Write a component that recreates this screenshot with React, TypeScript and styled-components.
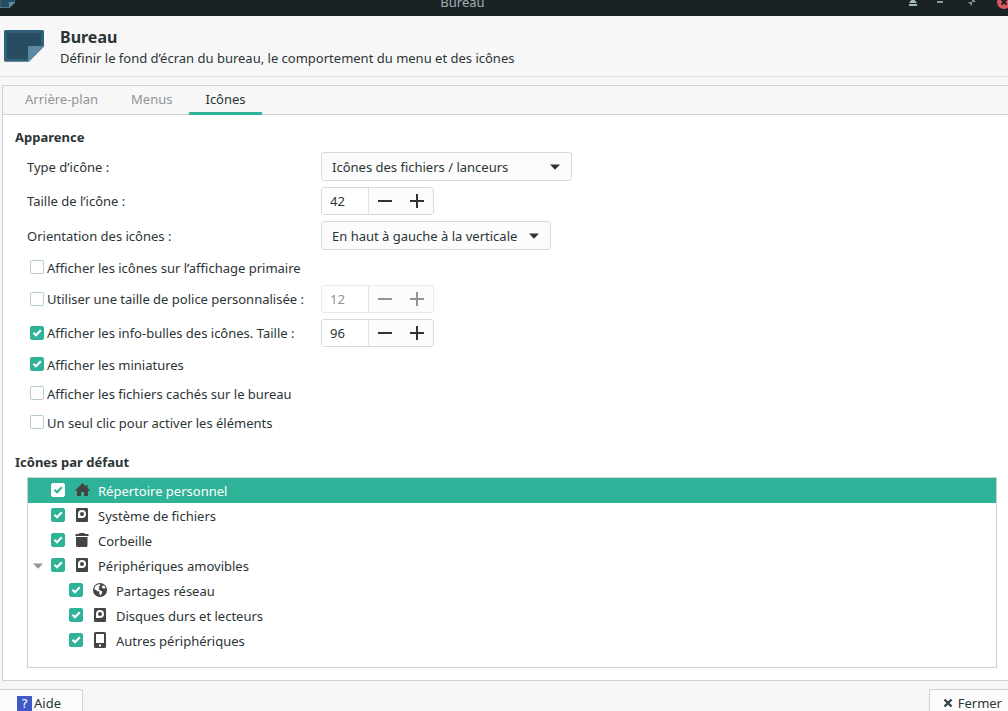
import React, { useId, useState } from "react";
import styled, { createGlobalStyle } from "styled-components";

const accent = "#2eb398";
const ink = "#2b3436";
const line = "#cfd1d1";
const soft = "#d8dada";

const GlobalStyle = createGlobalStyle`
  * { box-sizing: border-box; }
  body {
    margin: 0;
    overflow: hidden;
    background: #f7f7f7;
    color: ${ink};
    font: 13px/20px "Noto Sans", sans-serif;
  }
  button, input, select { font: inherit; color: inherit; margin: 0; }
  svg { display: block; flex: none; }
`;

const Window = styled.div`
  display: flex;
  flex-direction: column;
  height: 100vh;
  overflow: hidden;
`;

const TitleBar = styled.header`
  display: flex;
  align-items: flex-end;
  flex: none;
  height: 16px;
  overflow: hidden;
  background: #1b2224;
`;

const TitleRow = styled.div`
  display: grid;
  grid-template-columns: 1fr auto 1fr;
  align-items: center;
  flex: 1;
  height: 28px;
`;

const WindowTitle = styled.span`
  color: #a4aeb8;
  padding-right: 83px;
`;

const WindowButtons = styled.div`
  display: flex;
  justify-content: flex-end;
  gap: 16px;
  margin-right: -3px;
`;

const WindowButton = styled.button`
  padding: 0;
  border: 0;
  background: none;
`;

const Header = styled.div`
  display: flex;
  align-items: center;
  flex: none;
  gap: 16px;
  height: 61px;
  padding: 0 4px;
  border-bottom: 1px solid #dcdede;
`;

const Title = styled.h1`
  margin: 0;
  padding-top: 2px;
  font-size: 16px;
  line-height: 22px;
`;

const Subtitle = styled.p`
  margin: 0;
`;

const Notebook = styled.main`
  display: flex;
  flex-direction: column;
  flex: none;
  margin: 8px 0 0 2px;
  border: 1px solid ${line};
  border-right: 0;
  background: #fff;
`;

const TabBar = styled.div`
  display: flex;
  gap: 1px;
  height: 29px;
  padding-left: 6px;
  background: #f7f7f7;
  box-shadow: inset 0 -1px ${line};
`;

const Tab = styled.button<{ $active: boolean }>`
  padding: 0 16px;
  border: 0;
  border-bottom: 3px solid ${(p) => (p.$active ? accent : "transparent")};
  background: none;
  && { color: ${(p) => (p.$active ? ink : "#8f9495")}; }
`;

const TabPage = styled.div`
  display: flex;
  flex-direction: column;
  gap: 18px;
  padding: 12px 11px 12px 12px;
`;

const Section = styled.section`
  display: flex;
  flex-direction: column;
  gap: 5px;
`;

const SectionTitle = styled.h2`
  margin: 0;
  font-size: 13px;
  line-height: 20px;
`;

const Form = styled.div`
  display: flex;
  flex-direction: column;
  gap: 6px;
  padding-left: 12px;
`;

const Row = styled.div`
  display: flex;
  align-items: center;
  min-height: 23px;
`;

const LabelCell = styled.div`
  display: flex;
  align-items: center;
  width: 294px;
  gap: 3px;
  white-space: nowrap;
`;

const CheckCell = styled(LabelCell)`
  padding-left: 3px;
`;

const CheckWrap = styled.span`
  display: grid;
  flex: none;
  width: 14px;
  height: 14px;
  margin-bottom: 1px;
  & > * { grid-area: 1 / 1; }
  & > svg { pointer-events: none; }
`;

const CheckInput = styled.input<{ $onAccent?: boolean }>`
  appearance: none;
  width: 14px;
  height: 14px;
  border: 1px solid #b4cfcc;
  border-radius: 2px;
  background: #fff;
  &:checked {
    border-color: ${(p) => (p.$onAccent ? "#fff" : accent)};
    background: ${(p) => (p.$onAccent ? "#fff" : accent)};
  }
`;

const SelectWrap = styled.span<{ $width: number }>`
  display: grid;
  align-items: center;
  width: ${(p) => p.$width}px;
  height: 29px;
  & > * { grid-area: 1 / 1; }
  & > svg { justify-self: end; margin-right: 12px; pointer-events: none; }
`;

const Select = styled.select`
  appearance: none;
  width: 100%;
  height: 29px;
  padding: 0 30px 0 10px;
  border: 1px solid ${soft};
  border-radius: 3px;
  background: #fcfcfc;
`;

const Spin = styled.span<{ $disabled?: boolean }>`
  display: flex;
  height: 28px;
  border: 1px solid ${(p) => (p.$disabled ? "#e9eaea" : soft)};
  border-radius: 3px;
  background: #fcfcfc;
  color: ${(p) => (p.$disabled ? "#8f9495" : ink)};
  overflow: hidden;
`;

const SpinInput = styled.input`
  width: 47px;
  padding: 0 8px;
  border: 0;
  border-right: 1px solid #e0e2e2;
  background: #fff;
`;

const SpinButton = styled.button`
  display: grid;
  place-items: center;
  width: 32px;
  padding: 0;
  border: 0;
  background: none;
`;

const Tree = styled.ul`
  margin: 0 0 0 12px;
  padding: 0 0 14px;
  border: 1px solid ${line};
  list-style: none;
`;

const TreeRow = styled.li<{ $selected?: boolean; $level: number }>`
  display: flex;
  align-items: center;
  height: 25px;
  padding-left: ${(p) => 5 + p.$level * 18}px;
  background: ${(p) => (p.$selected ? accent : "transparent")};
  color: ${(p) => (p.$selected ? "#fff" : ink)};
`;

const Expander = styled.span`
  width: 18px;
`;

const TreeIcon = styled.span`
  margin: 0 8px 1px 9px;
`;

const Footer = styled.footer`
  display: flex;
  justify-content: space-between;
  flex: none;
  padding-top: 8px;
`;

const FooterButton = styled.button<{ $side: "left" | "right" }>`
  display: flex;
  align-items: center;
  gap: ${(p) => (p.$side === "left" ? 2 : 5)}px;
  height: 28px;
  padding: ${(p) => (p.$side === "left" ? "0 21px 0 17px" : "0 6px 0 13px")};
  border: 1px solid ${line};
  border-width: ${(p) => (p.$side === "left" ? "1px 1px 1px 0" : "1px 0 1px 1px")};
  border-radius: ${(p) => (p.$side === "left" ? "0 3px 3px 0" : "3px 0 0 3px")};
  background: #fcfcfc;
`;

const HelpBadge = styled.span`
  width: 15px;
  height: 15px;
  background: #4059c8;
  color: #fff;
  font: 13px/15px "DejaVu Sans Mono", monospace;
  text-align: center;
`;

function DesktopIcon({ width, height }: { width: number; height: number }) {
  return (
    <svg width={width} height={height} viewBox="0 0 40 32" aria-hidden="true">
      <path d="M2 .8H38a2 2 0 0 1 2 2V17L25 32H2a2 2 0 0 1-2-2V2.800a2 2 0 0 1 2-2Z" fill="#a9b4ba" />
      <path d="M1.500 0H38.500A1.500 1.500 0 0 1 40 1.500V16L24.500 31.500H1.500A1.500 1.500 0 0 1 0 30V1.500A1.500 1.500 0 0 1 1.500 0Z" fill="#2f607c" />
      <path d="M3 3H37V16H24V29H3Z" fill="#294d60" />
      <path d="M24 17.500A1.500 1.500 0 0 1 25.500 16H40L24.500 31.500H24Z" fill="#5c8aa6" />
    </svg>
  );
}

function Arrow({ color = ink }: { color?: string }) {
  return (
    <svg width="10" height="6" viewBox="0 0 10 6" aria-hidden="true">
      <path d="M0 .5H10L5 5.800Z" fill={color} />
    </svg>
  );
}

type IconName = "home" | "disk" | "trash" | "globe" | "device";

function Icon({ name }: { name: IconName }) {
  return (
    <svg width="16" height="16" viewBox="0 0 16 16" fill="#444" aria-hidden="true">
      {name === "home" && <path d="M8.500 1 1.500 8V9H3V14H7V10H10V14H14V9H15.500V8L13.500 6V3H12V4.500Z" />}
      {name === "disk" && (
        <path
          fillRule="evenodd"
          d="M3 1H13a1 1 0 0 1 1 1V14a1 1 0 0 1-1 1H3a1 1 0 0 1-1-1V2a1 1 0 0 1 1-1ZM8 3A4 4 0 0 0 4 7V11H8A4 4 0 0 0 8 3ZM8 5A2 2 0 1 1 8 9A2 2 0 0 1 8 5Z"
        />
      )}
      {name === "trash" && <path d="M5.500 1h5l.5 1H14.500V4H1.500V2H5ZM2 5H13.500V13.500A1.500 1.500 0 0 1 12 15H3.500A1.500 1.500 0 0 1 2 13.500Z" />}
      {name === "globe" && (
        <>
          <circle cx="8" cy="8" r="7" />
          <path d="M6.200 2.300 3.300 4 2.300 7.200 4 8l1.500 1.200 2 .3-.2 2.300.9 1.800 1.600-1.900.5-2-1.600-1.300-2.100-.7L7.500 6 6.400 5.100 7.800 4 8.600 2.400ZM10.600 3.600 9.800 5.200 11 6.600 13.600 6.200 12.600 4.100Z" fill="#fff" />
        </>
      )}
      {name === "device" && (
        <path
          fillRule="evenodd"
          d="M3.500 0H12.500A1.500 1.500 0 0 1 14 1.500V14.500A1.500 1.500 0 0 1 12.500 16H3.500A1.500 1.500 0 0 1 2 14.500V1.500A1.500 1.500 0 0 1 3.500 0ZM4 2V11H12V2ZM7 12.500V14.500H9V12.500Z"
        />
      )}
    </svg>
  );
}

type CheckProps = { id: string; initial?: boolean; onAccent?: boolean };

function Check({ id, initial = false, onAccent = false }: CheckProps) {
  const [checked, setChecked] = useState(initial);
  return (
    <CheckWrap>
      <CheckInput
        id={id}
        type="checkbox"
        $onAccent={onAccent}
        checked={checked}
        onChange={(e) => setChecked(e.target.checked)}
      />
      {checked && (
        <svg width="14" height="14" viewBox="0 0 14 14" aria-hidden="true">
          <path d="M3.500 6.700 6 9.200 10.800 4.300" fill="none" stroke={onAccent ? accent : "#fff"} strokeWidth="2.200" />
        </svg>
      )}
    </CheckWrap>
  );
}

function SpinBox({ id, initial, disabled = false, label }: { id: string; initial: number; disabled?: boolean; label: string }) {
  const [value, setValue] = useState(String(initial));
  const step = (by: number) => setValue(String(Number(value) + by));
  return (
    <Spin $disabled={disabled}>
      <SpinInput id={id} aria-label={label} inputMode="numeric" value={value} disabled={disabled} onChange={(e) => setValue(e.target.value)} />
      <SpinButton type="button" aria-label="Diminuer" disabled={disabled} onClick={() => step(-1)}>
        <svg width="14" height="14" viewBox="0 0 14 14" aria-hidden="true">
          <path d="M0 6H14V8H0Z" fill="currentColor" />
        </svg>
      </SpinButton>
      <SpinButton type="button" aria-label="Augmenter" disabled={disabled} onClick={() => step(1)}>
        <svg width="14" height="14" viewBox="0 0 14 14" aria-hidden="true">
          <path d="M0 6H6V0H8V6H14V8H8V14H6V8H0Z" fill="currentColor" />
        </svg>
      </SpinButton>
    </Spin>
  );
}

function SelectRow({ label, width, options }: { label: string; width: number; options: string[] }) {
  const id = useId();
  return (
    <Row>
      <LabelCell as="label" htmlFor={id}>{label}</LabelCell>
      <SelectWrap $width={width}>
        <Select id={id}>
          {options.map((o) => <option key={o}>{o}</option>)}
        </Select>
        <Arrow />
      </SelectWrap>
    </Row>
  );
}

function SpinRow({ label, value }: { label: string; value: number }) {
  const id = useId();
  return (
    <Row>
      <LabelCell as="label" htmlFor={id}>{label}</LabelCell>
      <SpinBox id={id} initial={value} label={label} />
    </Row>
  );
}

function CheckRow({ label, checked, value, disabled }: { label: string; checked?: boolean; value?: number; disabled?: boolean }) {
  const id = useId();
  return (
    <Row>
      <CheckCell>
        <Check id={id} initial={checked} />
        <label htmlFor={id}>{label}</label>
      </CheckCell>
      {value !== undefined && <SpinBox id={`${id}-value`} initial={value} disabled={disabled} label={label} />}
    </Row>
  );
}

const items: { label: string; icon: IconName; level: number; selected?: boolean; expandable?: boolean }[] = [
  { label: "Répertoire personnel", icon: "home", level: 0, selected: true },
  { label: "Système de fichiers", icon: "disk", level: 0 },
  { label: "Corbeille", icon: "trash", level: 0 },
  { label: "Périphériques amovibles", icon: "disk", level: 0, expandable: true },
  { label: "Partages réseau", icon: "globe", level: 1 },
  { label: "Disques durs et lecteurs", icon: "disk", level: 1 },
  { label: "Autres périphériques", icon: "device", level: 1 },
];

const tabs = ["Arrière-plan", "Menus", "Icônes"];

export default function App() {
  const [tab, setTab] = useState("Icônes");
  const treeId = useId();
  return (
    <Window>
      <GlobalStyle />
      <TitleBar>
        <TitleRow>
          <DesktopIcon width={15} height={12} />
          <WindowTitle>Bureau</WindowTitle>
          <WindowButtons>
            <WindowButton type="button" aria-label="Enrouler">
              <svg width="14" height="14" viewBox="0 0 14 14" fill="#a5bdb9">
                <path d="M6 3 10 8H2ZM2 9H10V11H2Z" />
              </svg>
            </WindowButton>
            <WindowButton type="button" aria-label="Réduire">
              <svg width="14" height="14" viewBox="0 0 14 14" fill="#8b9695">
                <path d="M0 6H6V8H0Z" />
              </svg>
            </WindowButton>
            <WindowButton type="button" aria-label="Agrandir">
              <svg width="14" height="14" viewBox="0 0 14 14" fill="#8b9695">
                <path d="M1 7H5V11L3.500 9.500ZM5 3V7H9L7.500 5.500Z" />
              </svg>
            </WindowButton>
            <WindowButton type="button" aria-label="Fermer la fenêtre">
              <svg width="14" height="14" viewBox="0 0 14 14">
                <circle cx="7" cy="7" r="7" fill="#d9575c" />
                <path d="M4.500 4.500 9.500 9.500M9.500 4.500 4.500 9.500" stroke="#1b2224" strokeWidth="2" />
              </svg>
            </WindowButton>
          </WindowButtons>
        </TitleRow>
      </TitleBar>

      <Header>
        <DesktopIcon width={40} height={32} />
        <div>
          <Title>Bureau</Title>
          <Subtitle>Définir le fond d’écran du bureau, le comportement du menu et des icônes</Subtitle>
        </div>
      </Header>

      <Notebook>
        <TabBar role="tablist">
          {tabs.map((t) => (
            <Tab key={t} type="button" role="tab" aria-selected={t === tab} $active={t === tab} onClick={() => setTab(t)}>
              {t}
            </Tab>
          ))}
        </TabBar>
        <TabPage role="tabpanel">
          <Section>
            <SectionTitle>Apparence</SectionTitle>
            <Form>
              <SelectRow label="Type d’icône :" width={251} options={["Icônes des fichiers / lanceurs"]} />
              <SpinRow label="Taille de l’icône :" value={42} />
              <SelectRow label="Orientation des icônes :" width={230} options={["En haut à gauche à la verticale"]} />
              <CheckRow label="Afficher les icônes sur l’affichage primaire" />
              <CheckRow label="Utiliser une taille de police personnalisée :" value={12} disabled />
              <CheckRow label="Afficher les info-bulles des icônes. Taille :" checked value={96} />
              <CheckRow label="Afficher les miniatures" checked />
              <CheckRow label="Afficher les fichiers cachés sur le bureau" />
              <CheckRow label="Un seul clic pour activer les éléments" />
            </Form>
          </Section>
          <Section>
            <SectionTitle>Icônes par défaut</SectionTitle>
            <Tree>
              {items.map((it, i) => (
                <TreeRow key={it.label} $selected={it.selected} $level={it.level}>
                  <Expander>{it.expandable && <Arrow color="#909596" />}</Expander>
                  <Check id={`${treeId}-${i}`} initial onAccent={it.selected} />
                  <TreeIcon><Icon name={it.icon} /></TreeIcon>
                  <label htmlFor={`${treeId}-${i}`}>{it.label}</label>
                </TreeRow>
              ))}
            </Tree>
          </Section>
        </TabPage>
      </Notebook>

      <Footer>
        <FooterButton type="button" $side="left">
          <HelpBadge aria-hidden="true">?</HelpBadge>
          Aide
        </FooterButton>
        <FooterButton type="button" $side="right">
          <svg width="10" height="10" viewBox="0 0 10 10" aria-hidden="true">
            <path d="M1.500 1.500 8.500 8.500M8.500 1.500 1.500 8.500" stroke="#3c4142" strokeWidth="2.400" />
          </svg>
          Fermer
        </FooterButton>
      </Footer>
    </Window>
  );
}
